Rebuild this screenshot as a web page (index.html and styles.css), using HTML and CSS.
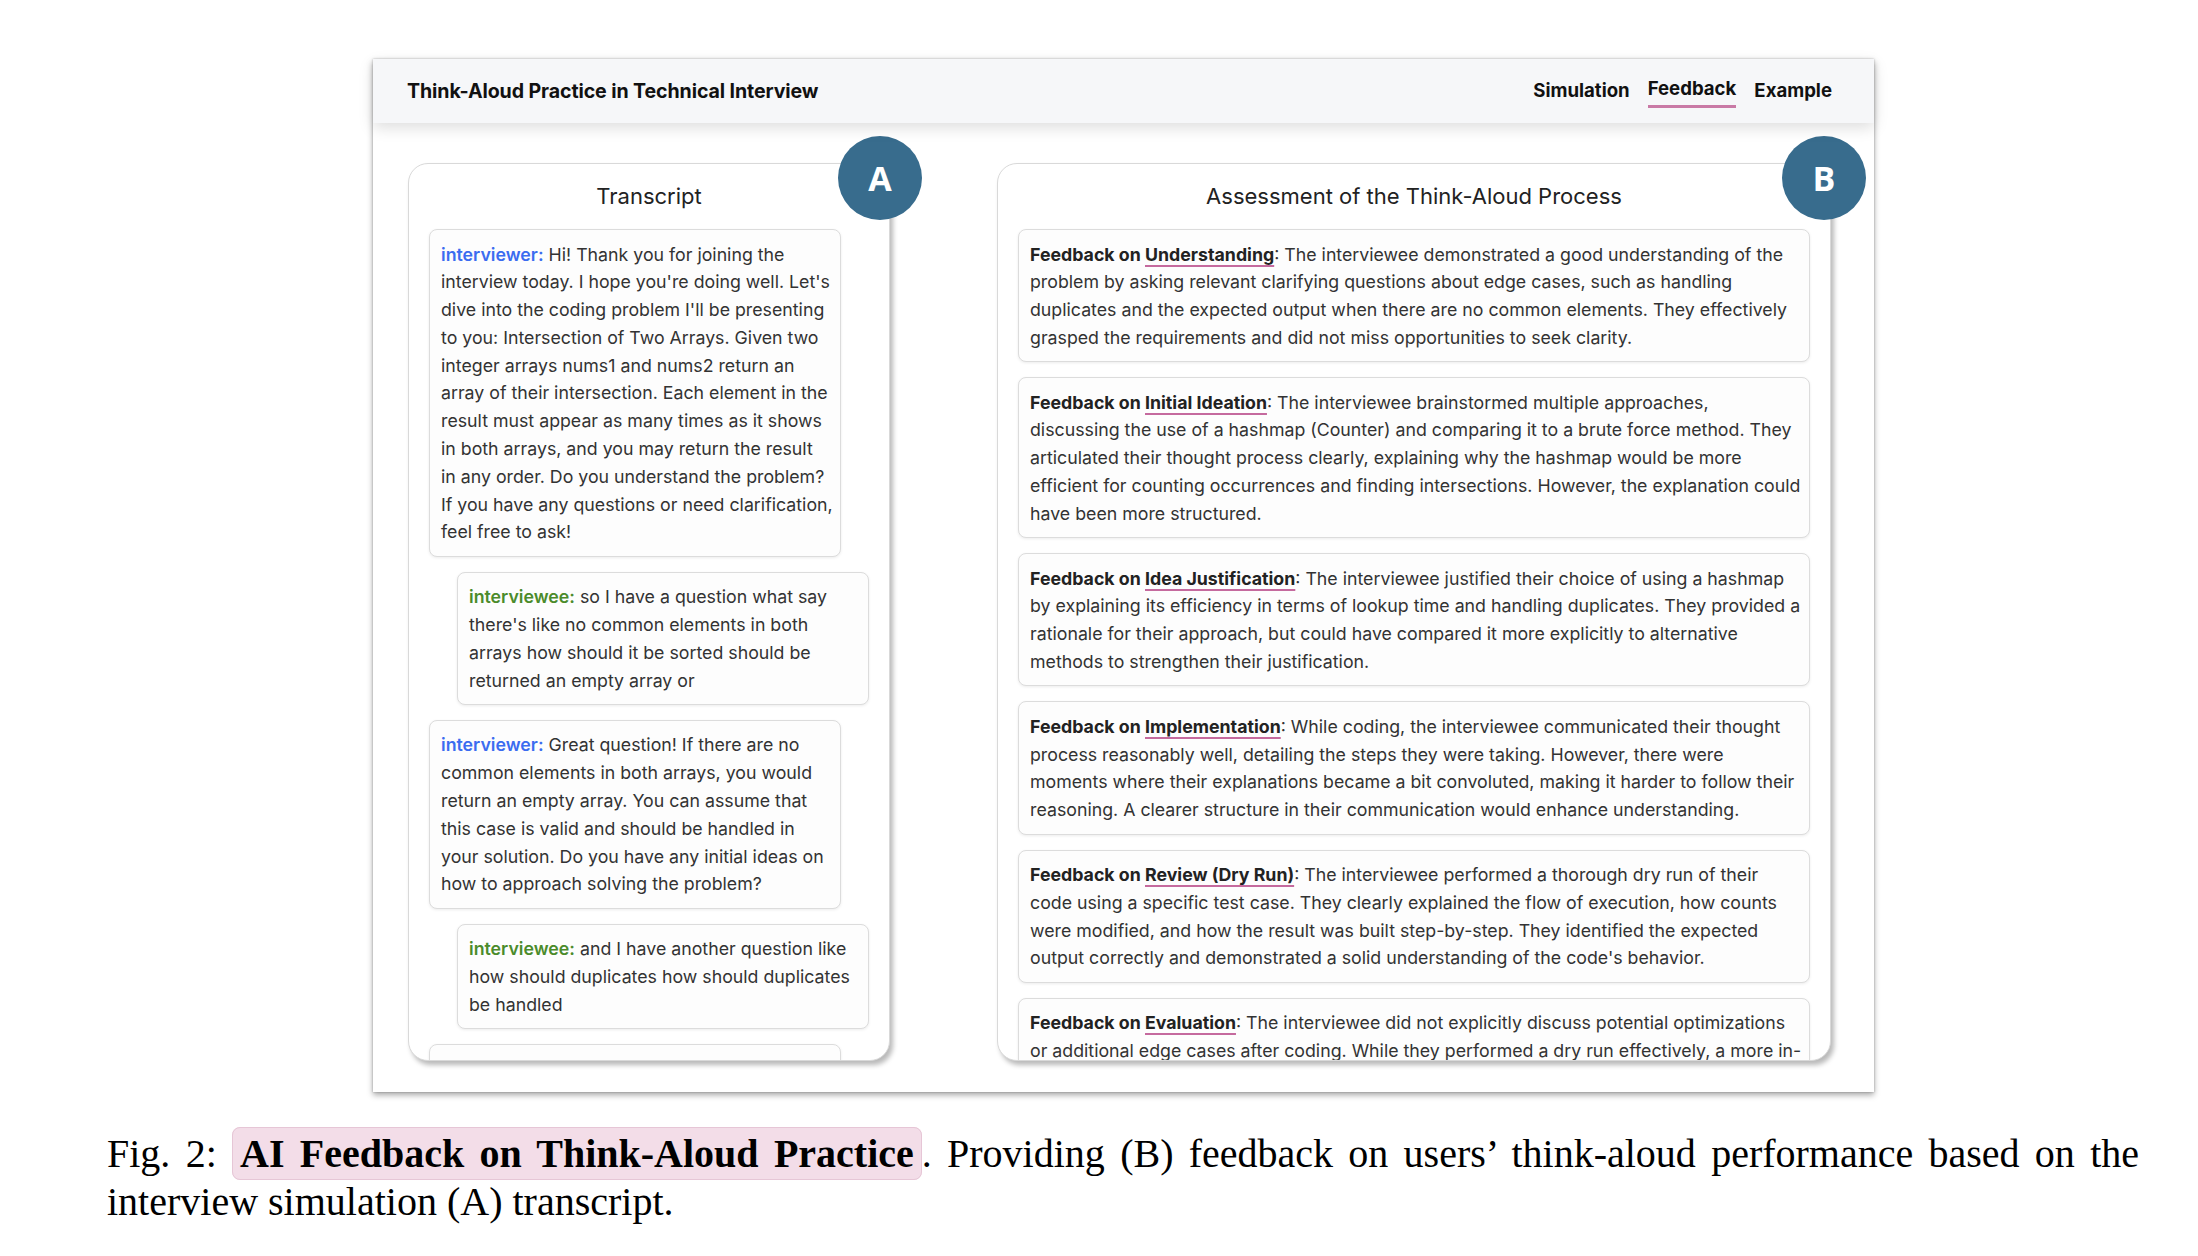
FILE: index.html
```html
<!DOCTYPE html>
<html lang="en">
<head>
<meta charset="utf-8">
<title>Think-Aloud Practice in Technical Interview</title>
<link rel="stylesheet" href="styles.css">
</head>
<body>
<main class="figure">
  <div class="app">
    <header class="topbar">
      <div class="brand">Think-Aloud Practice in Technical Interview</div>
      <nav class="nav">
        <span class="nav-item">Simulation</span>
        <span class="nav-item active">Feedback</span>
        <span class="nav-item">Example</span>
      </nav>
    </header>
    <div class="content">
      <section class="panel-wrap panel-left">
        <div class="panel">
          <h2 class="panel-title">Transcript</h2>
          <div class="msg interviewer"><span class="who">interviewer:</span> Hi! Thank you for joining the interview today. I hope you're doing well. Let's dive into the coding problem I'll be presenting to you: Intersection of Two Arrays. Given two integer arrays nums1 and nums2 return an array of their intersection. Each element in the result must appear as many times as it shows in both arrays, and you may return the result in&nbsp;any order. Do you understand the problem? If you have any questions or need clarification, feel free to ask!</div>
          <div class="msg interviewee"><span class="who">interviewee:</span> so I have a question what say there's like no common elements in both arrays how should it be sorted should be returned an empty array or</div>
          <div class="msg interviewer"><span class="who">interviewer:</span> Great question! If there are no common elements in both arrays, you would return an empty array. You can assume that this case is valid and should be handled in your solution. Do you have any initial ideas on how to approach solving the problem?</div>
          <div class="msg interviewee"><span class="who">interviewee:</span> and I have another question like how should duplicates how should duplicates be handled</div>
          <div class="msg interviewer"><span class="who">interviewer:</span></div>
        </div>
        <div class="badge">A</div>
      </section>
      <section class="panel-wrap panel-right">
        <div class="panel">
          <h2 class="panel-title">Assessment of the Think-Aloud Process</h2>
          <div class="card"><b>Feedback on <span class="cat">Understanding</span></b>: The interviewee demonstrated a good understanding of the problem by asking relevant clarifying questions about edge cases, such as handling duplicates and the expected output when there are no common elements. They effectively grasped the requirements and did not miss opportunities to seek clarity.</div>
          <div class="card"><b>Feedback on <span class="cat">Initial Ideation</span></b>: The interviewee brainstormed multiple approaches, discussing the use of a hashmap (Counter) and comparing it to a brute force method. They articulated their thought process clearly, explaining why the hashmap would be more efficient for counting occurrences and finding intersections. However, the explanation could have been more structured.</div>
          <div class="card"><b>Feedback on <span class="cat">Idea Justification</span></b>: The interviewee justified their choice of using a hashmap by explaining its efficiency in terms of lookup time and handling duplicates. They provided a rationale for their approach, but could have compared it more explicitly to alternative methods to strengthen their justification.</div>
          <div class="card"><b>Feedback on <span class="cat">Implementation</span></b>: While coding, the interviewee communicated their thought process reasonably well, detailing the steps they were taking. However, there were moments where their explanations became a bit convoluted, making it harder to follow their reasoning. A clearer structure in their communication would enhance understanding.</div>
          <div class="card"><b>Feedback on <span class="cat">Review (Dry Run)</span></b>: The interviewee performed a thorough dry run of their code using a specific test case. They clearly explained the flow of execution, how counts were modified, and how the result was built step-by-step. They identified the expected output correctly and demonstrated a solid understanding of the code's behavior.</div>
          <div class="card"><b>Feedback on <span class="cat">Evaluation</span></b>: The interviewee did not explicitly discuss potential optimizations or additional edge cases after coding. While they performed a dry run effectively, a more in-depth evaluation would have been beneficial.</div>
        </div>
        <div class="badge">B</div>
      </section>
    </div>
  </div>
  <p class="caption">Fig. 2: <span class="hl">AI Feedback on Think-Aloud Practice</span>. Providing (B) feedback on users’ think-aloud performance based on the interview simulation (A) transcript.</p>
</main>
</body>
</html>
```
FILE: styles.css
```css
* { box-sizing: border-box; }
html, body { margin: 0; padding: 0; background: #ffffff; }
body { font-family: Inter, "Liberation Sans", sans-serif; color: #333; }

.figure {
  padding-top: 59px;
  display: flex;
  flex-direction: column;
}

.app {
  margin-left: 373px;
  width: 1501px;
  height: 1033px;
  background: #fff;
  box-shadow: 0 3px 6px rgba(0,0,0,0.35), 0 0 2px rgba(0,0,0,0.25);
  display: flex;
  flex-direction: column;
}

.topbar {
  height: 64px;
  flex: 0 0 64px;
  background: #f6f7f9;
  display: flex;
  align-items: center;
  justify-content: space-between;
  padding: 0 42px 0 34px;
  box-shadow: 0 5px 14px rgba(0,0,0,0.13);
  position: relative;
  z-index: 1;
}
.brand { font-size: 19.6px; font-weight: 700; color: #111; letter-spacing: -0.1px; }
.nav { display: flex; gap: 18px; }
.nav-item { font-size: 18.6px; font-weight: 700; color: #111; padding: 3px 0 4px; border-bottom: 3px solid transparent; margin-top: 2px; }
.nav-item.active { border-bottom-color: #c97aa6; margin-top: 0; }

.content {
  display: flex;
  gap: 107px;
  padding: 40px 43px 0 35px;
}

.panel-wrap { position: relative; height: 898px; }
.panel-left { width: 482px; }
.panel-right { width: 834px; }

.panel {
  height: 100%;
  border: 1px solid #d9d9d9;
  border-radius: 20px;
  background: #fff;
  box-shadow: 3px 4px 5px rgba(0,0,0,0.28);
  overflow: hidden;
  padding: 17px 20px 0 20px;
  display: flex;
  flex-direction: column;
  gap: 15px;
}

.panel-title {
  margin: 0 0 3px;
  font-size: 22px;
  line-height: 30px;
  font-weight: 400;
  color: #222;
  text-align: center;
}

.msg, .card {
  flex: 0 0 auto;
  border: 1px solid #dcdcdc;
  border-radius: 8px;
  background: #fdfdfd;
  box-shadow: 0 1px 3px rgba(0,0,0,0.08);
  padding: 10.5px 6px 9.5px 11px;
  font-size: 17.75px;
  line-height: 27.8px;
  color: #333;
}
.msg { width: 412px; padding-right: 5.5px; }
.msg.interviewee { margin-left: 28px; }
.who { font-weight: 600; }
.interviewer .who { color: #3b6cf0; }
.interviewee .who { color: #4b8b2b; }

.card b { font-weight: 700; color: #222; }
.cat {
  text-decoration: underline;
  text-decoration-color: #c56a9e;
  text-decoration-thickness: 2px;
  text-underline-offset: 4px;
}

.badge {
  position: absolute;
  top: -27px;
  width: 84px;
  height: 84px;
  border-radius: 50%;
  background: #386c8d;
  color: #fff;
  font-family: "Open Sans", "Liberation Sans", sans-serif;
  font-weight: 700;
  font-size: 34px;
  display: flex;
  align-items: center;
  justify-content: center;
}
.panel-left .badge { right: -32px; }
.panel-right .badge { right: -35px; }

.caption {
  margin: 38px 0 0 107px;
  width: 2032px;
  font-family: "Liberation Serif", serif;
  font-size: 40px;
  line-height: 47.7px;
  color: #000;
  text-align: justify;
}
.hl {
  font-weight: 700;
  background: #f3dde8;
  border: 1px solid #e6c6d6;
  border-radius: 8px;
  padding: 3px 7px;
}
```
